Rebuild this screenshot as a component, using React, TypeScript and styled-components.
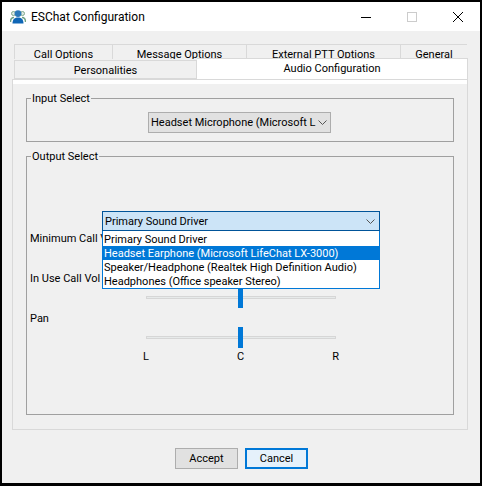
import React from 'react';
import styled, { createGlobalStyle } from 'styled-components';

const GlobalStyle = createGlobalStyle`
  html, body {
    margin: 0;
    padding: 0;
    background: #000;
  }
  * {
    box-sizing: border-box;
  }
`;

const Frame = styled.div`
  width: 482px;
  height: 486px;
  padding: 2px 2px 3px 2px;
  background: #000;
  font-family: Roboto, "Noto Sans", sans-serif;
  font-size: 11px;
  color: #000;
`;

const Dialog = styled.div`
  height: 100%;
  display: flex;
  flex-direction: column;
  background: #f0f0f0;
`;

const TitleBar = styled.div`
  height: 29px;
  flex: none;
  display: flex;
  align-items: center;
  background: #fff;
  padding-left: 8px;
`;

const TitleText = styled.span`
  margin-left: 5px;
  font-size: 12px;
  flex: 1;
`;

const WindowButton = styled.div`
  width: 46px;
  height: 29px;
  display: flex;
  align-items: center;
  justify-content: center;
  position: relative;
  left: 1px;
`;

const Body = styled.div`
  flex: 1;
  display: flex;
  flex-direction: column;
  padding: 13px 12px 0 10px;
`;

const TabRow = styled.div`
  display: flex;
  height: 15px;
  margin: 0 1px 0 2px;
  overflow: hidden;
`;

const BackTab = styled.div<{ $w: number }>`
  width: ${p => p.$w}px;
  height: 19px;
  flex: none;
  margin-right: -1px;
  background: #f0f0f0;
  border: 1px solid #d9d9d9;
  text-align: center;
  line-height: 20px;
`;

const FrontTabs = styled.div`
  display: flex;
  height: 23px;
  margin-left: 2px;
`;

const Personalities = styled.div`
  width: 183px;
  height: 19px;
  margin-top: 1px;
  background: #f0f0f0;
  border: 1px solid #d9d9d9;
  text-align: center;
  line-height: 20px;
`;

const AudioTab = styled.div`
  width: 271px;
  height: 24px;
  margin-top: -1px;
  background: #fff;
  border-top: 1px solid #d9d9d9;
  border-right: 1px solid #d9d9d9;
  text-align: center;
  line-height: 20px;
`;

const TabPanel = styled.div`
  width: 456px;
  height: 351px;
  margin-top: -3px;
  background: linear-gradient(#fff 0 4px, #f0f0f0 4px);
  border: 1px solid #d9d9d9;
  display: flex;
  flex-direction: column;
  padding: 10px 13px 0 13px;
`;

const GroupBox = styled.fieldset<{ $h: number }>`
  height: ${p => p.$h}px;
  flex: none;
  margin: 0;
  padding: 0;
  border: 1px solid #a0a0a0;
  min-width: 0;
  position: relative;
`;

const Legend = styled.legend`
  margin-left: 4px;
  padding: 2px 1px 0;
  line-height: 14px;
`;

const InputRow = styled.div`
  display: flex;
  justify-content: center;
  padding: 0 1px 0 0;
  margin-top: 6px;
`;

const Combo = styled.div`
  width: 183px;
  height: 21px;
  border: 1px solid #adadad;
  background: #e1e1e1;
  display: flex;
  align-items: center;
  justify-content: space-between;
  padding: 0 3px 0 2px;
  white-space: nowrap;
  overflow: hidden;
`;

const OutputGap = styled.div`
  height: 6px;
  flex: none;
`;

const OutputBody = styled.div`
  display: flex;
  position: relative;
  padding-left: 3px;
`;

const Labels = styled.div`
  width: 116px;
  flex: none;
  padding-top: 67px;
`;

const RowLabel = styled.div`
  width: 73px;
  height: 40px;
  line-height: 16px;
  white-space: nowrap;
`;

const OpenCombo = styled.div`
  position: absolute;
  left: 75px;
  top: 47px;
  width: 278px;
  z-index: 2;
`;

const ComboHead = styled.div`
  height: 21px;
  background: #cce4f7;
  border: 1px solid #005499;
  border-bottom-width: 2px;
  display: flex;
  align-items: center;
  justify-content: space-between;
  padding: 0 4px 0 2px;
`;

const ComboList = styled.div`
  height: 58px;
  margin-top: -1px;
  background: #fff;
  border: 1px solid #0078d7;
  border-top: 0;
  padding-top: 1px;
`;

const ComboItem = styled.div<{ $selected?: boolean }>`
  height: 14px;
  line-height: 16px;
  padding-left: 1px;
  white-space: nowrap;
  background: ${p => (p.$selected ? '#0078d7' : 'transparent')};
  color: ${p => (p.$selected ? '#fff' : '#000')};
`;

const Sliders = styled.div`
  width: 190px;
  padding-top: 123px;
`;

const Slider = styled.div`
  height: 21px;
  margin-bottom: 19px;
  position: relative;
`;

const Track = styled.div`
  height: 3px;
  background: #e7eaea;
  border: 1px solid #d6d6d6;
  position: relative;
  top: 9px;
`;

const Thumb = styled.div`
  position: absolute;
  left: 92px;
  top: 0;
  width: 5px;
  height: 21px;
  background: #0078d7;
`;

const Ticks = styled.div`
  display: flex;
  justify-content: space-between;
  margin: -18px -3px 0;
  line-height: 16px;
`;

const ButtonRow = styled.div`
  display: flex;
  justify-content: center;
  gap: 7px;
  padding: 18px 0 0 3px;
`;

const PushButton = styled.div<{ $focus?: boolean }>`
  width: 63px;
  height: 21px;
  display: flex;
  align-items: center;
  justify-content: center;
  background: ${p => (p.$focus ? '#e5f1fb' : '#e1e1e1')};
  border: ${p => (p.$focus ? '2px solid #0078d7' : '1px solid #adadad')};
`;

const Chevron = () => (
  <svg width="9" height="5" viewBox="0 0 9 5" fill="none" stroke="#555" strokeWidth="1">
    <path d="M0.5 0.5 L4.5 4.5 L8.5 0.5" />
  </svg>
);

const AppIcon = () => (
  <svg width="16" height="14" viewBox="0 0 16 14">
    <circle cx="3.5" cy="3.5" r="2" fill="#dfeae2" stroke="#7fa98c" />
    <circle cx="12.5" cy="3.5" r="2" fill="#dfeae2" stroke="#7fa98c" />
    <path d="M0.5 12 C0.5 9 1.5 7.5 4 7.5 M15.5 12 C15.5 9 14.5 7.5 12 7.5" fill="none" stroke="#6fa184" strokeWidth="1.4" />
    <circle cx="8" cy="3.6" r="3.4" fill="#2b78b8" />
    <path d="M2.5 13.5 C2.5 9 5 7.5 8 7.5 C11 7.5 13.5 9 13.5 13.5 Z" fill="#0f66b5" />
  </svg>
);

const App = () => (
  <Frame>
    <GlobalStyle />
    <Dialog>
      <TitleBar>
        <AppIcon />
        <TitleText>ESChat Configuration</TitleText>
        <WindowButton>
          <svg width="10" height="10" viewBox="0 0 10 10"><path d="M0 5.5H10" stroke="#000" /></svg>
        </WindowButton>
        <WindowButton>
          <svg width="10" height="10" viewBox="0 0 10 10"><rect x="0.5" y="0.5" width="9" height="9" fill="none" stroke="#ccc" /></svg>
        </WindowButton>
        <WindowButton>
          <svg width="10" height="10" viewBox="0 0 10 10"><path d="M0 0L10 10M10 0L0 10" stroke="#000" /></svg>
        </WindowButton>
      </TitleBar>
      <Body>
        <TabRow>
          <BackTab $w={99}>Call Options</BackTab>
          <BackTab $w={135}>Message Options</BackTab>
          <BackTab $w={155}>External PTT Options</BackTab>
          <BackTab $w={68}>General</BackTab>
        </TabRow>
        <FrontTabs>
          <Personalities>Personalities</Personalities>
          <AudioTab>Audio Configuration</AudioTab>
        </FrontTabs>
        <TabPanel>
          <GroupBox $h={52}>
            <Legend>Input Select</Legend>
            <InputRow>
              <Combo>
                Headset Microphone (Microsoft L
                <Chevron />
              </Combo>
            </InputRow>
          </GroupBox>
          <OutputGap />
          <GroupBox $h={267}>
            <Legend>Output Select</Legend>
            <OutputBody>
              <Labels>
                <RowLabel>Minimum Call V</RowLabel>
                <RowLabel>In Use Call Vol</RowLabel>
                <RowLabel>Pan</RowLabel>
              </Labels>
              <Sliders>
                <Slider><Track /><Thumb /></Slider>
                <Slider><Track /><Thumb /></Slider>
                <Ticks><span>L</span><span>C</span><span>R</span></Ticks>
              </Sliders>
              <OpenCombo>
                <ComboHead>
                  Primary Sound Driver
                  <Chevron />
                </ComboHead>
                <ComboList>
                  <ComboItem>Primary Sound Driver</ComboItem>
                  <ComboItem $selected>Headset Earphone (Microsoft LifeChat LX-3000)</ComboItem>
                  <ComboItem>Speaker/Headphone (Realtek High Definition Audio)</ComboItem>
                  <ComboItem>Headphones (Office speaker Stereo)</ComboItem>
                </ComboList>
              </OpenCombo>
            </OutputBody>
          </GroupBox>
        </TabPanel>
        <ButtonRow>
          <PushButton>Accept</PushButton>
          <PushButton $focus>Cancel</PushButton>
        </ButtonRow>
      </Body>
    </Dialog>
  </Frame>
);

export default App;
